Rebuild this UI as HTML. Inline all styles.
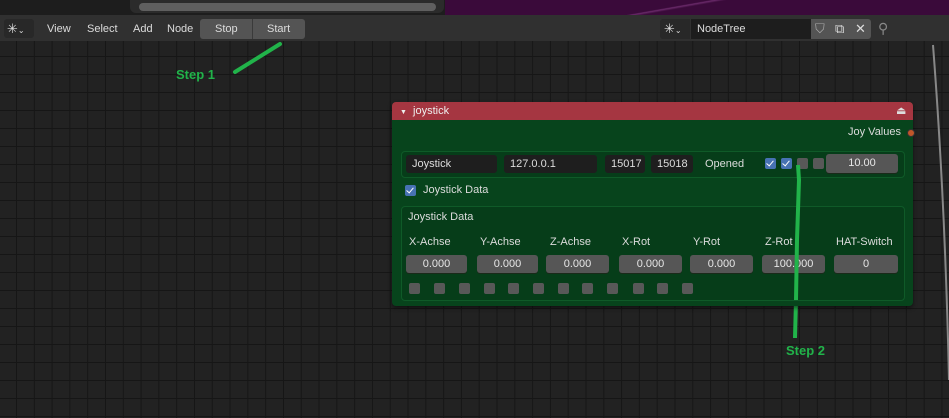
<!DOCTYPE html>
<html><head><style>
*{margin:0;padding:0;box-sizing:border-box}
body{width:949px;height:418px;overflow:hidden;position:relative;font-family:"Liberation Sans","DejaVu Sans",sans-serif;font-size:11px;color:#ddd;
background-color:#222;background-image:linear-gradient(#161616 1px,transparent 1px),linear-gradient(90deg,#161616 1px,transparent 1px);background-size:17.8px 18px;background-position:16px 2px}
.a{position:absolute}
.fld{position:absolute;background:#1e1e1e;border-radius:3px;height:18px;line-height:18px;padding-left:6px;color:#ddd}
.num{position:absolute;background:#565656;border-radius:3px;height:18px;line-height:18px;text-align:center;color:#e6e6e6;box-shadow:0 1px 0 #1a2a1a}
.cb{position:absolute;width:11px;height:11px;border-radius:2px;background:#585858}
.cbc{background:#4772b3}
.cbc::after{content:"";position:absolute;left:3px;top:1px;width:3px;height:6px;border:solid #fff;border-width:0 1.5px 1.5px 0;transform:rotate(40deg)}
.lbl{position:absolute;color:#dcdcdc}
</style></head><body>
<div class="a" style="left:0;top:0;width:949px;height:15px;background:#1d1d1d"></div>
<div class="a" style="left:445px;top:0;width:504px;height:15px;background:#3a0a3a;background-image:linear-gradient(170deg,transparent 45%,#6a2a6a 46%,transparent 48%)"></div>
<div class="a" style="left:130px;top:0;width:314px;height:13px;background:#2b2b2b;border-radius:0 0 6px 6px"></div>
<div class="a" style="left:139px;top:3px;width:297px;height:8px;background:#5f5f5f;border-radius:4px"></div>
<div class="a" style="left:0;top:15px;width:949px;height:26px;background:#303030"></div>
<div class="a" style="left:4px;top:19px;width:30px;height:19px;background:#282828;border-radius:3px;color:#ddd;font-size:13px;line-height:19px;padding-left:3px">✳<span style="font-size:8px">⌄</span></div>
<div class="lbl" style="left:47px;top:23px">View</div>
<div class="lbl" style="left:87px;top:23px">Select</div>
<div class="lbl" style="left:133px;top:23px">Add</div>
<div class="lbl" style="left:167px;top:23px">Node</div>
<div class="a" style="left:200px;top:19px;width:105px;height:20px;background:#545454;border-radius:3px"></div>
<div class="a" style="left:252px;top:19px;width:1px;height:20px;background:#3a3a3a"></div>
<div class="lbl" style="left:215px;top:23px">Stop</div>
<div class="lbl" style="left:267px;top:23px">Start</div>
<div class="a" style="left:660px;top:19px;width:30px;height:20px;background:#282828;border-radius:3px 0 0 3px;font-size:13px;line-height:20px;padding-left:4px">✳<span style="font-size:8px">⌄</span></div>
<div class="fld" style="left:691px;top:19px;width:120px;height:20px;line-height:20px;border-radius:0;background:#1d1d1d">NodeTree</div>
<div class="a" style="left:811px;top:19px;width:60px;height:20px;background:#545454;border-radius:0 3px 3px 0"></div>
<div class="lbl" style="left:815px;top:21px;color:#aaa;font-size:13px">⛉</div>
<div class="lbl" style="left:835px;top:21px;font-size:13px">⧉</div>
<div class="lbl" style="left:855px;top:21px;font-size:13px">✕</div>
<div class="lbl" style="left:878px;top:20px;color:#888;font-size:14px">⚲</div>
<svg class="a" style="left:0;top:0" width="949" height="418">
<line x1="235" y1="72" x2="280" y2="44" stroke="#21b34a" stroke-width="4" stroke-linecap="round"/>
<path d="M798 165 L799 180 L797 240 L796 300 L795 338" stroke="#21b34a" stroke-width="4" fill="none"/>
<path d="M933 45 Q945 200 949 380" stroke="#888" stroke-width="2" fill="none"/>
</svg>
<div class="a" style="left:176px;top:67px;color:#21b34a;font-weight:bold;font-size:13px">Step 1</div>
<div class="a" style="left:786px;top:343px;color:#21b34a;font-weight:bold;font-size:13px">Step 2</div>
<div class="a" style="left:392px;top:102px;width:521px;height:204px;background:#07441c;border-radius:4px;overflow:hidden;box-shadow:0 2px 4px rgba(0,0,0,.5)">
 <div style="height:18px;background:#a53641;color:#eee;line-height:18px;padding-left:8px;font-size:11px"><span style="font-size:7px">▼</span>&nbsp; joystick</div>
</div>
<div class="a" style="left:896px;top:104px;color:#ddd;font-size:11px">⏏</div>
<div class="lbl" style="left:848px;top:126px">Joy Values</div>
<div class="a" style="left:907px;top:129px;width:8px;height:8px;border-radius:50%;background:#c0562a;border:1px solid #333"></div>
<div class="a" style="left:401px;top:151px;width:504px;height:27px;border:1px solid #0f5a28;border-radius:4px;background:#063d19"></div>
<div class="fld" style="left:406px;top:155px;width:91px">Joystick</div>
<div class="fld" style="left:504px;top:155px;width:93px">127.0.0.1</div>
<div class="fld" style="left:605px;top:155px;width:40px">15017</div>
<div class="fld" style="left:651px;top:155px;width:42px">15018</div>
<div class="lbl" style="left:705px;top:158px">Opened</div>
<div class="cb cbc" style="left:765px;top:158px"></div>
<div class="cb cbc" style="left:781px;top:158px"></div>
<div class="cb" style="left:797px;top:158px"></div>
<div class="cb" style="left:813px;top:158px"></div>
<div class="num" style="left:826px;top:154px;width:72px;height:19px;line-height:19px">10.00</div>
<div class="cb cbc" style="left:405px;top:185px"></div>
<div class="lbl" style="left:423px;top:184px">Joystick Data</div>
<div class="a" style="left:401px;top:206px;width:504px;height:95px;border:1px solid #0f5a28;border-radius:4px;background:#063d19"></div>
<div class="lbl" style="left:408px;top:211px">Joystick Data</div>
<div class="lbl" style="left:409px;top:236px">X-Achse</div>
<div class="lbl" style="left:480px;top:236px">Y-Achse</div>
<div class="lbl" style="left:550px;top:236px">Z-Achse</div>
<div class="lbl" style="left:622px;top:236px">X-Rot</div>
<div class="lbl" style="left:693px;top:236px">Y-Rot</div>
<div class="lbl" style="left:765px;top:236px">Z-Rot</div>
<div class="lbl" style="left:836px;top:236px">HAT-Switch</div>
<div class="num" style="left:406px;top:255px;width:61px">0.000</div>
<div class="num" style="left:477px;top:255px;width:61px">0.000</div>
<div class="num" style="left:546px;top:255px;width:63px">0.000</div>
<div class="num" style="left:619px;top:255px;width:63px">0.000</div>
<div class="num" style="left:690px;top:255px;width:63px">0.000</div>
<div class="num" style="left:762px;top:255px;width:63px">100.000</div>
<div class="num" style="left:834px;top:255px;width:64px">0</div>
<div class="cb" style="left:409px;top:283px"></div>
<div class="cb" style="left:434px;top:283px"></div>
<div class="cb" style="left:459px;top:283px"></div>
<div class="cb" style="left:484px;top:283px"></div>
<div class="cb" style="left:508px;top:283px"></div>
<div class="cb" style="left:533px;top:283px"></div>
<div class="cb" style="left:558px;top:283px"></div>
<div class="cb" style="left:582px;top:283px"></div>
<div class="cb" style="left:607px;top:283px"></div>
<div class="cb" style="left:633px;top:283px"></div>
<div class="cb" style="left:657px;top:283px"></div>
<div class="cb" style="left:682px;top:283px"></div>
<svg class="a" style="left:0;top:0" width="949" height="418"><path d="M798 165 L799 180 L797 240 L796 300" stroke="#21b34a" stroke-width="4" fill="none"/></svg>
</body></html>
